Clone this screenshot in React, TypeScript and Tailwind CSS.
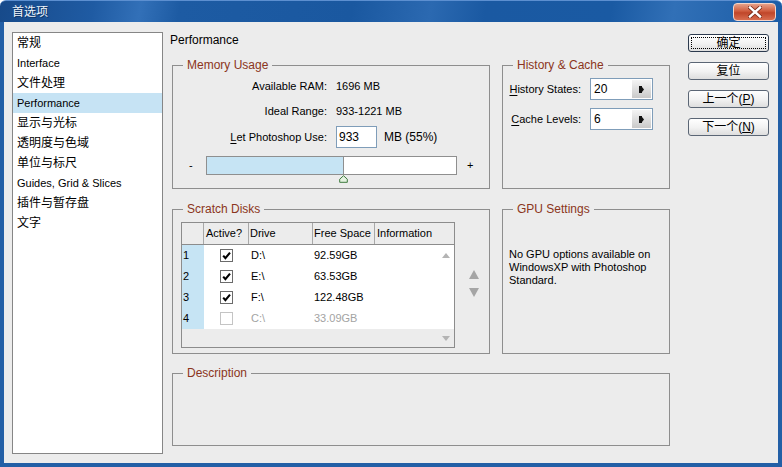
import React from 'react'

const navItems = [
  '常规',
  'Interface',
  '文件处理',
  'Performance',
  '显示与光标',
  '透明度与色域',
  '单位与标尺',
  'Guides, Grid & Slices',
  '插件与暂存盘',
  '文字',
]

const disks = [
  { n: 1, on: true, drive: 'D:\\', free: '92.59GB' },
  { n: 2, on: true, drive: 'E:\\', free: '63.53GB' },
  { n: 3, on: true, drive: 'F:\\', free: '122.48GB' },
  { n: 4, on: false, drive: 'C:\\', free: '33.09GB' },
]

const isCjk = (s: string) => /[\u4e00-\u9fff]/.test(s)

function Group({ title, className, children }: { title: string; className: string; children?: React.ReactNode }) {
  return (
    <fieldset className={`border border-[#8e8e8e] ${className}`}>
      <legend className="ml-[10px] px-[4px] text-[12px] leading-[14px] text-[#8b3520]">{title}</legend>
      {children}
    </fieldset>
  )
}

function XpButton({ children, primary }: { children: React.ReactNode; primary?: boolean }) {
  return (
    <button
      className={`relative flex h-[18px] w-[81px] items-center justify-center rounded-[3px] border bg-[linear-gradient(to_bottom,#ffffff,#f3f3f3_50%,#dedede)] text-[12px] leading-none text-black ${
        primary ? 'border-[#2c3a4e]' : 'border-[#5b6675]'
      }`}
    >
      {primary && <span className="pointer-events-none absolute inset-[2px] border border-dotted border-black" />}
      {children}
    </button>
  )
}

function SpinField({ hot, rest, value }: { hot: string; rest: string; value: string }) {
  return (
    <div className="flex items-center">
      <div className="w-[87px] pr-[9px] text-right text-[11px]">
        <span className="underline underline-offset-2">{hot}</span>
        {rest}
      </div>
      <div className="flex h-[22px] w-[63px] border border-[#7f9db9] bg-white">
        <div className="flex flex-1 items-center pl-[3px] text-[12px]">{value}</div>
        <div className="m-[1px] flex w-[19px] items-center justify-center bg-[linear-gradient(to_bottom,#f4f4f4,#c9c9c9)]">
          <svg width="5" height="7" viewBox="0 0 5 7">
            <rect x="0" y="0" width="3" height="7" fill="#111" />
            <path d="M3 1 L5 3.5 L3 6 Z" fill="#111" />
          </svg>
        </div>
      </div>
    </div>
  )
}

function Check({ on }: { on: boolean }) {
  return (
    <div className={`flex h-[13px] w-[13px] items-center justify-center border bg-white ${on ? 'border-[#6b6b6b]' : 'border-[#c4c4c4]'}`}>
      {on && (
        <svg width="11" height="11" viewBox="0 0 11 11">
          <path d="M2.2 5.6 L4.4 8.2 L9 2.6" fill="none" stroke="#000" strokeWidth="2.1" />
        </svg>
      )}
    </div>
  )
}

export default function App() {
  return (
    <div className="flex h-[467px] w-[782px] flex-col font-['Liberation_Sans','Noto_Sans_CJK_SC',sans-serif] text-black">
      {/* title bar */}
      <div className="flex h-[22px] items-center rounded-t-[6px] border-t border-[#5c8fd0] bg-[linear-gradient(100deg,#174a8a_0%,#1f5ba3_12%,#3270b8_18%,#1d5ba3_23%,#1a58a0_45%,#2b69b1_55%,#1a59a2_62%,#1a5aa3_78%,#3170b7_86%,#1b5ca5_100%)] pl-[12px] pr-[6px]">
        <span className="text-[12px] text-[#eef4fb] [text-shadow:1px_1px_0_#0d3464]">首选项</span>
        <div className="ml-auto flex h-[18px] w-[43px] items-center justify-center rounded-[4px] border border-[#f4d4c8] bg-[linear-gradient(to_bottom,#e6a088,#cf5c3e_45%,#c0462a_55%,#d86e50)]">
          <svg width="14" height="12" viewBox="0 0 14 12">
            <path d="M2 1.5 L12 10.5 M12 1.5 L2 10.5" stroke="#7a2a18" strokeWidth="4" strokeLinecap="square" />
            <path d="M2 1.5 L12 10.5 M12 1.5 L2 10.5" stroke="#ffffff" strokeWidth="2.4" strokeLinecap="square" />
          </svg>
        </div>
      </div>

      {/* client */}
      <div className="flex flex-1 border-x-4 border-b-4 border-[#235fa6] bg-[#ececec] pl-[8px] pr-[9px] pt-[10px]">
        {/* category list */}
        <div className="flex h-[422px] w-[151px] flex-col border border-[#868686] bg-white">
          {navItems.map((item) => (
            <div
              key={item}
              className={`flex h-[20px] items-center pl-[4px] ${isCjk(item) ? 'text-[12px]' : 'text-[11px]'} ${
                item === 'Performance' ? 'bg-[#c6e3f4]' : ''
              }`}
            >
              {item}
            </div>
          ))}
        </div>

        {/* panel */}
        <div className="ml-[9px] flex w-[498px] flex-col pt-[1px]">
          <div className="-ml-[2px] h-[14px] text-[12px] leading-[14px]">Performance</div>

          <div className="mt-[11px] flex gap-[12px]">
            <Group title="Memory Usage" className="h-[131px] w-[318px]">
              <div className="flex flex-col pt-[2px] text-[11px]">
                <div className="flex h-[25px] items-center">
                  <div className="w-[154px] text-right">Available RAM:</div>
                  <div className="ml-[9px]">1696 MB</div>
                </div>
                <div className="flex h-[25px] items-center">
                  <div className="w-[154px] text-right">Ideal Range:</div>
                  <div className="ml-[9px]">933-1221 MB</div>
                </div>
                <div className="flex h-[26px] items-center">
                  <div className="w-[154px] text-right">
                    <span className="underline underline-offset-2">L</span>et Photoshop Use:
                  </div>
                  <div className="ml-[9px] flex h-[22px] w-[41px] items-center border border-[#7f9db9] bg-white pl-[2px] text-[12px]">933</div>
                  <div className="ml-[7px] text-[12px]">MB (55%)</div>
                </div>
                <div className="mt-[6px] flex items-center">
                  <div className="w-[33px] pl-[16px] text-[11px]">-</div>
                  <div className="relative flex h-[19px] w-[251px] border border-[#8f8f8f] bg-white">
                    <div className="h-full w-[137px] border-r border-[#8f8f8f] bg-[#c6e4f4]" />
                    <svg className="absolute left-[132px] top-[18px]" width="9" height="8" viewBox="0 0 9 8">
                      <path d="M4.5 0.7 L8.3 4.2 L8.3 7.3 L0.7 7.3 L0.7 4.2 Z" fill="#e4f2e0" stroke="#3e7a3e" strokeWidth="1" />
                    </svg>
                  </div>
                  <div className="ml-[10px] text-[11px]">+</div>
                </div>
              </div>
            </Group>

            <Group title="History & Cache" className="h-[131px] w-[168px]">
              <div className="flex flex-col gap-[8px] pt-[6px]">
                <SpinField hot="H" rest="istory States:" value="20" />
                <SpinField hot="C" rest="ache Levels:" value="6" />
              </div>
            </Group>
          </div>

          <div className="mt-[13px] flex gap-[12px]">
            <Group title="Scratch Disks" className="h-[152px] w-[318px]">
              <div className="flex pl-[8px] pt-[6px]">
                <div className="flex h-[126px] w-[274px] flex-col border border-[#8c8c8c] text-[11px]">
                  <div className="flex h-[22px] border-b border-[#8c8c8c] bg-[#ececec]">
                    <div className="w-[22px] border-r border-[#a8a8a8]" />
                    <div className="flex w-[45px] items-center border-r border-[#a8a8a8] pl-[2px]">Active?</div>
                    <div className="flex w-[64px] items-center border-r border-[#a8a8a8] pl-[1px]">Drive</div>
                    <div className="flex w-[62px] items-center border-r border-[#a8a8a8] pl-[1px]">Free Space</div>
                    <div className="flex flex-1 items-center pl-[2px]">Information</div>
                  </div>
                  <div className="flex flex-1">
                    <div className="flex flex-1 flex-col">
                      {disks.map((d) => (
                        <div key={d.n} className={`flex h-[21px] bg-white ${d.on ? 'text-black' : 'text-[#a3a3a3]'}`}>
                          <div className="flex w-[22px] items-center bg-[#c6e4f4] pl-[1px] text-black">{d.n}</div>
                          <div className="flex w-[45px] items-center justify-center">
                            <Check on={d.on} />
                          </div>
                          <div className="flex w-[64px] items-center pl-[2px]">{d.drive}</div>
                          <div className="flex w-[62px] items-center pl-[1px]">{d.free}</div>
                          <div className="flex-1" />
                        </div>
                      ))}
                      <div className="flex-1 bg-[#ececec]" />
                    </div>
                    <div className="flex w-[17px] flex-col">
                      <div className="flex h-[84px] justify-center bg-white pt-[8px]">
                        <svg width="8" height="5" viewBox="0 0 8 5">
                          <path d="M4 0 L8 5 L0 5 Z" fill="#b4b4b4" />
                        </svg>
                      </div>
                      <div className="flex flex-1 items-center justify-center bg-[#ececec]">
                        <svg width="8" height="5" viewBox="0 0 8 5">
                          <path d="M0 0 L8 0 L4 5 Z" fill="#b4b4b4" />
                        </svg>
                      </div>
                    </div>
                  </div>
                </div>
                <div className="ml-[14px] flex flex-col gap-[9px] pt-[48px]">
                  <svg width="10" height="9" viewBox="0 0 10 9">
                    <path d="M5 0 L10 9 L0 9 Z" fill="#a5a5a5" />
                  </svg>
                  <svg width="10" height="9" viewBox="0 0 10 9">
                    <path d="M0 0 L10 0 L5 9 Z" fill="#a5a5a5" />
                  </svg>
                </div>
              </div>
            </Group>

            <Group title="GPU Settings" className="h-[152px] w-[168px]">
              <div className="pl-[6px] pt-[32px] text-[11px] leading-[13px]">
                No GPU options available on
                <br />
                WindowsXP with Photoshop
                <br />
                Standard.
              </div>
            </Group>
          </div>

          <Group title="Description" className="mt-[12px] h-[80px] w-[498px]" />
        </div>

        {/* buttons */}
        <div className="ml-[18px] mt-[2px] flex flex-col gap-[10px]">
          <XpButton primary>确定</XpButton>
          <XpButton>复位</XpButton>
          <XpButton>
            上一个(<span className="underline">P</span>)
          </XpButton>
          <XpButton>
            下一个(<span className="underline">N</span>)
          </XpButton>
        </div>
      </div>
    </div>
  )
}
